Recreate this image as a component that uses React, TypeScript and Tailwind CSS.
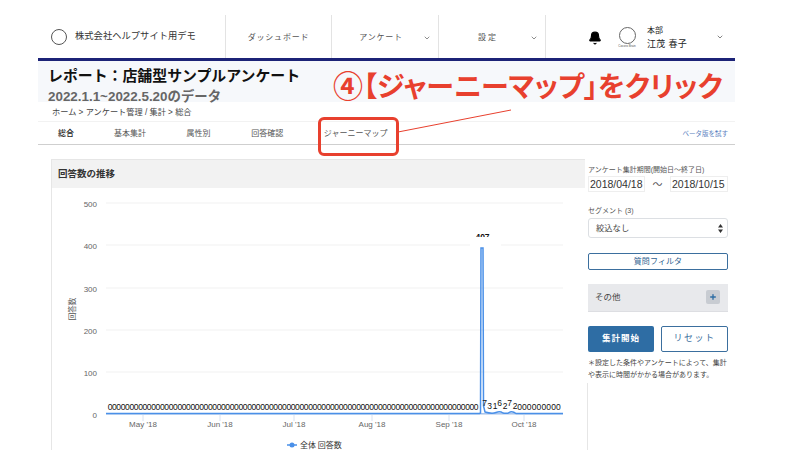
import { Bell, ChevronDown, Plus } from "lucide-react";

const jp = "font-['Liberation_Sans','Noto_Sans_CJK_JP',sans-serif]";

const navItems = [
  { label: "ダッシュボード", arrow: false, width: "w-[106px]", pad: "pt-[2px]" },
  { label: "アンケート", arrow: true, width: "w-[107px]", pad: "pt-[2px] pr-[8px]" },
  { label: "設定", arrow: true, width: "w-[107px]", pad: "pt-[2px] pr-[8px] tracking-[2px]" },
];

const tabs = ["基本集計", "属性別", "回答確認", "ジャーニーマップ"];

const gridLines = [
  { y: 203, label: "500" },
  { y: 245, label: "400" },
  { y: 288, label: "300" },
  { y: 330, label: "200" },
  { y: 372, label: "100" },
  { y: 414, label: "0" },
];

const months = [
  { x: 143, label: "May '18" },
  { x: 220, label: "Jun '18" },
  { x: 294, label: "Jul '18" },
  { x: 372, label: "Aug '18" },
  { x: 449, label: "Sep '18" },
  { x: 524, label: "Oct '18" },
];

const zeros = Array.from({ length: 85 }, (_, i) => 110 + i * 4.36);
const peaks = [
  { x: 484.5, y: 406, t: "7" },
  { x: 489.5, y: 409, t: "3" },
  { x: 495, y: 409, t: "1" },
  { x: 499.5, y: 406, t: "6" },
  { x: 505, y: 409, t: "2" },
  { x: 509.5, y: 406, t: "7" },
  { x: 515, y: 409, t: "2" },
];
const tail = Array.from({ length: 9 }, (_, i) => 519.5 + i * 4.87);

const Chart = () => (
  <svg width="535" height="262" viewBox="52 188 535 262" className="block">
    {gridLines.map((g) => (
      <g key={g.y}>
        <line x1="106" x2="563" y1={g.y} y2={g.y} stroke="#f1f1f1" strokeWidth="1" />
        <text x="97" y={g.y + 3.5} textAnchor="end" fontSize="8" fill="#666" fontFamily="Liberation Sans">
          {g.label}
        </text>
      </g>
    ))}
    <text
      x="0"
      y="0"
      fontSize="7.5"
      fill="#555"
      fontFamily="Noto Sans CJK JP"
      textAnchor="middle"
      transform="translate(75 309) rotate(-90)"
    >
      回答数
    </text>
    <line x1="106" x2="563" y1="413.7" y2="413.7" stroke="#a9c6ee" strokeWidth="1.4" />
    {months.map((m) => (
      <g key={m.x}>
        <line x1={m.x} x2={m.x} y1="414" y2="421" stroke="#d9e2f0" strokeWidth="1" />
        <text x={m.x} y="427" textAnchor="middle" fontSize="8" fill="#666" fontFamily="Liberation Sans">
          {m.label}
        </text>
      </g>
    ))}
    <path
      d="M106 413.5H479.5L480.5 413L481 248L483 248L483.5 406L485 412Q492 414 496 412.5Q500 411 503 413Q507 414 510 412Q513 411 516 413.5H563"
      fill="none"
      stroke="#4a90e8"
      strokeWidth="1.5"
    />
    <text x="482.5" y="240" textAnchor="middle" fontSize="8.5" fontWeight="700" fill="#111" fontFamily="Liberation Sans">
      407
    </text>
    <rect x="470" y="237" width="31" height="10" fill="#fff" />
    {zeros.map((x) => (
      <text key={x} x={x} y="410" textAnchor="middle" fontSize="8.5" fill="#111" fontFamily="Liberation Sans">
        0
      </text>
    ))}
    {peaks.map((p) => (
      <text key={p.x} x={p.x} y={p.y} textAnchor="middle" fontSize="8.5" fill="#111" fontFamily="Liberation Sans">
        {p.t}
      </text>
    ))}
    {tail.map((x) => (
      <text key={x} x={x} y="410" textAnchor="middle" fontSize="8.5" fill="#111" fontFamily="Liberation Sans">
        0
      </text>
    ))}
    <line x1="287" x2="297" y1="445" y2="445" stroke="#4a90e8" strokeWidth="1.5" />
    <circle cx="292" cy="445" r="2.5" fill="#4a90e8" />
    <text x="300" y="448" fontSize="8" fill="#333" fontFamily="Noto Sans CJK JP">
      全体 回答数
    </text>
  </svg>
);

const Sidebar = () => (
  <aside className="w-[140px] shrink-0 pt-[5px]">
    <p className="text-[7px] leading-[11px] text-[#555] whitespace-nowrap">アンケート集計期間(開始日〜終了日)</p>
    <div className="flex items-center mt-px text-[#333]">
      <div className="w-[57px] h-[16px] bg-white border border-[#eeeeee] text-[10.5px] leading-[14px] pl-[1px] font-['Liberation_Sans',sans-serif]">
        2018/04/18
      </div>
      <span className="w-[25px] text-center text-[10px] text-[#555]">〜</span>
      <div className="w-[58px] h-[16px] bg-white border border-[#eeeeee] text-[10.5px] leading-[14px] pl-[1px] font-['Liberation_Sans',sans-serif]">
        2018/10/15
      </div>
    </div>
    <p className="text-[7px] leading-[11px] text-[#555] mt-[13px]">セグメント (3)</p>
    <div className="mt-[2px] h-[20px] border border-[#dcdfe3] rounded-[3px] flex items-center justify-between pl-[7px] pr-[4px] text-[8.3px] text-[#444]">
      <span>絞込なし</span>
      <svg width="5" height="9" viewBox="0 0 5 9">
        <path d="M2.5 0L5 3.5H0ZM2.5 9L0 5.5H5Z" fill="#333" />
      </svg>
    </div>
    <button className="mt-[15px] w-full h-[17px] border border-[#3b6f9e] rounded-[2px] text-[8px] leading-none text-[#2f5f8f] tracking-[0.1px] bg-white">
      質問フィルタ
    </button>
    <div className="mt-[13px] h-[28px] bg-[#e8e9ec] border-b border-[#dddee2] flex items-center justify-between pl-[7px] pr-[8px] text-[8.5px] text-[#444]">
      <span>その他</span>
      <span className="w-[14px] h-[14px] rounded-[2px] bg-[#c8ccd2] flex items-center justify-center">
        <Plus size={8} strokeWidth={4} className="text-[#2e6da4]" />
      </span>
    </div>
    <div className="mt-[14px] flex justify-between">
      <button className="w-[66px] h-[26px] bg-[#2e6da4] rounded-[2px] text-white text-[8.5px] font-bold tracking-[1px]">
        集計開始
      </button>
      <button className="w-[67px] h-[26px] border border-[#3b6f9e] rounded-[2px] bg-white text-[#3b6f9e] text-[9px] tracking-[1.5px]">
        リセット
      </button>
    </div>
    <p className="mt-[5px] text-[7px] leading-[12px] text-[#444] whitespace-nowrap">
      ＊設定した条件やアンケートによって、集計
      <br />
      や表示に時間がかかる場合があります。
    </p>
  </aside>
);

export default function App() {
  return (
    <div className={`${jp} relative w-[792px] h-[450px] overflow-hidden bg-white`}>
      <div className="w-[697px] ml-[38px] pt-[15px]">
        <header className="flex h-[43px] border-b-[3px] border-[#1c2377] box-content">
          <div className="w-[187px] shrink-0 flex items-center pl-[13px] pt-[1px]">
            <span className="w-[16px] h-[16px] rounded-full border-[1.5px] border-[#555] mr-[8px]" />
            <span className="text-[9.3px] text-[#333] whitespace-nowrap">株式会社ヘルプサイト用デモ</span>
          </div>
          {navItems.map((item) => (
            <div
              key={item.label}
              className={`${item.width} ${item.pad} shrink-0 border-l border-[#e3e3e3] relative flex items-center justify-center text-[8px] tracking-[0.8px] text-[#555]`}
            >
              {item.label}
              {item.arrow && <ChevronDown size={8} strokeWidth={2} className="absolute right-[7px] text-[#555]" />}
            </div>
          ))}
          <div className="flex-1 border-l border-[#e3e3e3] flex items-center relative">
            <Bell size={14} fill="#000" className="text-black ml-[42px] mt-[2px]" />
            <div className="ml-[15px] flex flex-col items-center w-[20px]">
              <span className="w-[17px] h-[17px] rounded-full border border-[#666] mt-[2px]" />
              <span className="text-[3px] leading-[5px] text-[#555] whitespace-nowrap">Cocoro Brain</span>
            </div>
            <div className="ml-[10px] text-[#222] pt-[1px]">
              <div className="text-[8px] leading-[13px]">本部</div>
              <div className="text-[9px] leading-[14px] tracking-[0.3px] whitespace-nowrap">江茂 春子</div>
            </div>
            <ChevronDown size={8} strokeWidth={2} className="absolute right-[11px] text-[#444]" />
          </div>
        </header>

        <div className="h-[41px] bg-[#f6f8fb] pl-[10px] pt-[6px]">
          <h1 className="text-[14.9px] leading-[19px] font-bold text-[#111] whitespace-nowrap">
            レポート：店舗型サンプルアンケート
          </h1>
          <p className="text-[13.4px] leading-[17px] mt-[2px] font-bold text-[#666] whitespace-nowrap">
            2022.1.1~2022.5.20のデータ
          </p>
        </div>

        <p className="pl-[14px] mt-[5px] text-[8.2px] leading-[11px] text-[#444] whitespace-nowrap">
          ホーム &gt; アンケート管理 / 集計 &gt; 総合
        </p>

        <nav className="mt-[3px] h-[24px] pt-[2px] border-t border-[#f2f2f2] border-b-[1.5px] border-b-[#cfcfcf] flex items-center pl-[20px] pr-[7px] text-[8px] text-[#555] box-border">
          <span className="font-medium text-[#222] mr-[40px]">総合</span>
          <div className="flex gap-[40.6px]">
            {tabs.map((t) => (
              <span key={t} className="whitespace-nowrap">
                {t}
              </span>
            ))}
          </div>
          <span className="ml-auto text-[6.5px] text-[#5b7fc0]">ベータ版を試す</span>
        </nav>

        <div className="flex ml-[13px] mt-[14px]">
          <section className="w-[536px] shrink-0 border-l-[1.5px] border-[#e6e6e6] flex flex-col">
            <h2 className="h-[29px] mr-[2px] bg-[#f2f2f2] border-t border-[#e6e6e6] flex items-center pl-[6px] text-[9.5px] font-bold text-[#333]">
              回答数の推移
            </h2>
            <Chart />
          </section>
          <div className="w-px shrink-0 mt-[224px] h-[67px] bg-[#e6e6e6]" />
          <Sidebar />
        </div>
      </div>

      {/* 説明の赤字と枠 */}
      <div className="absolute left-[333px] top-[67px] text-[28px] leading-[40px] font-bold text-[#e8402e] whitespace-nowrap [font-feature-settings:'palt']">
        <span className="text-[30px]">④</span>【ジャーニーマップ」をクリック
      </div>
      <div className="absolute left-[318px] top-[117px] w-[81px] h-[39px] border-[3px] border-[#e8402e] rounded-[6px]" />
      <svg className="absolute left-[396px] top-[106px]" width="118" height="30" viewBox="0 0 118 30">
        <line x1="2" y1="26" x2="115" y2="4" stroke="#e8402e" strokeWidth="1" />
      </svg>
    </div>
  );
}
